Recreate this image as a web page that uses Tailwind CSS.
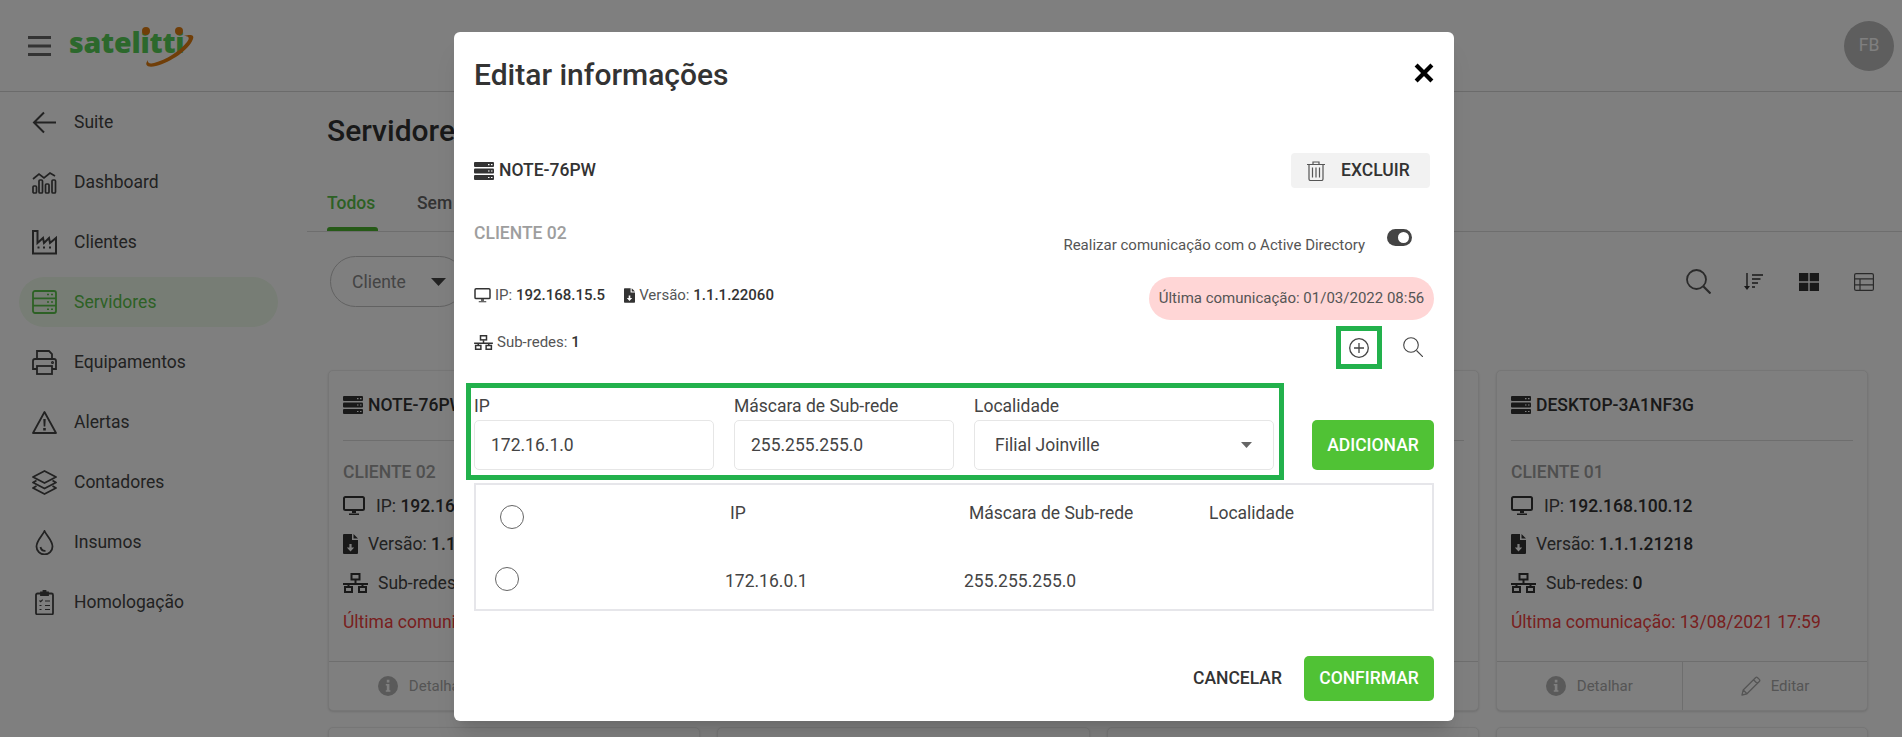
<!DOCTYPE html>
<html lang="pt-BR">
<head>
<meta charset="utf-8">
<title>Servidores</title>
<script src="https://cdn.jsdelivr.net/npm/@tailwindcss/browser@4"></script>
</head>
<body class="m-0">
<svg class="hidden" width="0" height="0">
  <symbol id="server" viewBox="0 0 20 18"><rect width="20" height="5" rx="1" fill="currentColor"/><rect y="6.5" width="20" height="5" rx="1" fill="currentColor"/><rect y="13" width="20" height="5" rx="1" fill="currentColor"/><path d="M14 2h1.5v1.2H14zM17 2h1.5v1.2H17zM14 8.4h1.5v1.2H14zM17 8.4h1.5v1.2H17zM14 14.9h1.5v1.2H14zM17 14.9h1.5v1.2H17z" fill="#fff"/></symbol>
  <symbol id="monitor" viewBox="0 0 22 20"><rect x="1" y="1" width="20" height="13" rx="1.5" fill="none" stroke="currentColor" stroke-width="2"/><path d="M9 15h4v2H9zM6 17.5h10V19H6z" fill="currentColor"/></symbol>
  <symbol id="file" viewBox="0 0 15 20"><path d="M0 1a1 1 0 0 1 1-1h8v6h6v13a1 1 0 0 1-1 1H1a1 1 0 0 1-1-1zM10.500 0 15 4.500h-4.500z" fill="currentColor"/><path d="M6.400 10h2.200v3.500h2.600L7.500 17.500l-3.700-4h2.600z" fill="#fff"/></symbol>
  <symbol id="net" viewBox="0 0 25 20"><g fill="none" stroke="currentColor" stroke-width="2"><rect x="8.500" y="1" width="8" height="5.500"/><rect x="2" y="14" width="7" height="5"/><rect x="16" y="14" width="7" height="5"/><path d="M12.500 7v4M0 11h25M5.500 11v3M19.500 11v3"/></g></symbol>
  <symbol id="info" viewBox="0 0 20 20"><circle cx="10" cy="10" r="10" fill="currentColor"/><path d="M8.800 3.800h2.600v2.600H8.800zM7.800 8h3.600v6.200h1v1.600H7.800v-1.600h1V9.600h-1z" fill="#fff"/></symbol>
  <symbol id="pencil" viewBox="0 0 20 20"><path d="M1 19l1.200-5L14.500 1.700a1.500 1.500 0 0 1 2.100 0l1.700 1.700a1.500 1.500 0 0 1 0 2.100L6 17.800zM2.200 14 6 17.800M12.500 3.700l3.800 3.800" fill="none" stroke="currentColor" stroke-width="1.300" stroke-linejoin="round"/></symbol>
</svg>

<div class="relative h-[737px] w-[1902px] overflow-hidden bg-white font-['Roboto',sans-serif] text-[#444]">
  <header class="flex h-[92px] items-center border-b border-[#d6d6d6] pl-[28px] pr-[8px]">
    <svg class="h-[20px] w-[23px] text-[#666]" viewBox="0 0 23 20"><path d="M0 1.500h23M0 10h23M0 18.500h23" stroke="currentColor" stroke-width="3"/></svg>
    <div class="relative ml-[18px] h-[60px] w-[130px]">
      <span class="absolute left-0 top-[8px] font-['Open_Sans',sans-serif] text-[28.5px] font-extrabold leading-[36px] tracking-[-0.2px] text-[#58d058]">satelitti</span>
      <svg class="absolute left-0 top-0 h-[60px] w-[130px]" viewBox="0 0 130 60"><path d="M79 44c-4 5-1 8 8 6 15-4 33-16 37-27 1.500-4-2-5-9-3 5 0 6 2 3 6-7 9-21 18-33 21-4 1-7 0-6-3z" fill="#e07d10"/><circle cx="77" cy="15" r="4" fill="#e07d10"/><circle cx="110" cy="15" r="4" fill="#e07d10"/></svg>
    </div>
    <div class="ml-auto flex h-[50px] w-[50px] items-center justify-center rounded-full bg-[#bcbcbc] text-[17.5px] text-white">FB</div>
  </header>

  <div class="flex h-[645px]">
    <nav class="flex w-[307px] flex-none flex-col gap-[10px] pt-[5px] text-[17.5px] text-[#444]">
      <a class="flex h-[50px] items-center pl-[32px]"><svg class="mr-[17px] h-[25px] w-[25px]" viewBox="0 0 25 25" fill="none" stroke="currentColor" stroke-width="2"><path d="M24 12.500H3M12 2.500l-10 10 10 10"/></svg>Suite</a>
      <a class="flex h-[50px] items-center pl-[32px]"><svg class="mr-[17px] h-[25px] w-[25px]" viewBox="0 0 25 25" fill="none" stroke="currentColor" stroke-width="1.700"><path d="M1 9l6-5 5 4 6-5 5 3"/><rect x="1" y="16" width="3.500" height="7" rx="1"/><rect x="7" y="10" width="3.500" height="13" rx="1"/><rect x="13.500" y="14" width="3.500" height="9" rx="1"/><rect x="20" y="10" width="3.500" height="13" rx="1"/></svg>Dashboard</a>
      <a class="flex h-[50px] items-center pl-[32px]"><svg class="mr-[17px] h-[25px] w-[25px]" viewBox="0 0 25 25" fill="none" stroke="currentColor" stroke-width="2"><path d="M1 1h4.500v12l5.500-5 1 5 5-5 1 5 6-5v15.500H1z"/><path d="M5.500 17.500h2M11 17.500h2M17 17.500h2" stroke-width="2"/></svg>Clientes</a>
      <a class="ml-[19px] flex h-[50px] w-[259px] items-center rounded-[25px] bg-[#eefbea] pl-[13px] text-[#5bc24a]"><svg class="mr-[17px] h-[24px] w-[25px]" viewBox="0 0 25 24" fill="none" stroke="currentColor" stroke-width="1.800"><rect x="1" y="1" width="23" height="22" rx="2"/><path d="M1 8.300h23M1 15.600h23"/><path d="M15 4.600h2M19 4.600h2M15 12h2M19 12h2M15 19.300h2M19 19.300h2" stroke-width="1.500"/></svg>Servidores</a>
      <a class="flex h-[50px] items-center pl-[32px]"><svg class="mr-[17px] h-[25px] w-[25px]" viewBox="0 0 25 25" fill="none" stroke="currentColor" stroke-width="1.800"><path d="M5 9V1h12l3 3v5M5 19H1V11a2 2 0 0 1 2-2h19a2 2 0 0 1 2 2v8h-4"/><rect x="5" y="16" width="15" height="8"/><circle cx="20.500" cy="12.500" r=".6"/></svg>Equipamentos</a>
      <a class="flex h-[50px] items-center pl-[32px]"><svg class="mr-[17px] h-[25px] w-[25px]" viewBox="0 0 25 25"><path d="M12.500 2 24 23H1z" fill="none" stroke="currentColor" stroke-width="1.800" stroke-linejoin="round"/><path d="M11.300 9h2.400l-.4 7.500h-1.600zM11.200 18h2.600v2.400h-2.600z" fill="currentColor"/></svg>Alertas</a>
      <a class="flex h-[50px] items-center pl-[32px]"><svg class="mr-[17px] h-[25px] w-[25px]" viewBox="0 0 25 25" fill="none" stroke="currentColor" stroke-width="1.800" stroke-linejoin="round"><path d="M12.500 1 24 7l-11.500 6L1 7zM4.500 10.500 1 12.500l11.500 6 11.500-6-3.500-2M4.500 16 1 18l11.500 6L24 18l-3.500-2"/></svg>Contadores</a>
      <a class="flex h-[50px] items-center pl-[32px]"><svg class="mr-[17px] h-[25px] w-[25px]" viewBox="0 0 25 25" fill="none" stroke="currentColor" stroke-width="1.800"><path d="M12.500 1c2 4.500 8 9.500 8 15.500a8 8 0 0 1-16 0C4.500 10.500 10.500 5.500 12.500 1z"/><path d="M8.500 17c.5 2.500 2.500 4 5 3.800"/></svg>Insumos</a>
      <a class="flex h-[50px] items-center pl-[32px]"><svg class="mr-[17px] h-[25px] w-[25px]" viewBox="0 0 25 25" fill="none" stroke="currentColor" stroke-width="1.800"><rect x="4" y="3.500" width="17" height="21" rx="1.500"/><path d="M9 4V2.500h2.500V1h2v1.500H16V5H9z" fill="currentColor"/><path d="M7.500 10.500l1.200 1.200 2-2M13 11h5M7.500 15.500h2M13 15.500h5M7.500 19.500h2M13 19.500h5" stroke-width="1.200"/></svg>Homologação</a>
    </nav>

    <main class="min-w-0 flex-1">
      <h1 class="ml-[20px] mt-[21px] text-[30px] font-medium leading-[36px] text-[#333]">Servidores</h1>
      <div class="mt-[41px] flex gap-[39px] border-b border-[#dcdcdc] pl-[20px] text-[17.5px] font-medium">
        <div class="w-[51px] text-[#5bc24a]"><div class="h-[37px] leading-[26px]">Todos</div><div class="h-[4px] rounded-t-[3px] bg-[#4cb52f]"></div></div>
        <div class="text-[#666]"><div class="h-[37px] leading-[26px]">Sem comunicação</div></div>
      </div>
      <div class="mt-[24px] flex h-[51px] items-center pl-[23px] pr-[28px]">
        <div class="flex h-[51px] w-[135px] items-center rounded-full border border-[#c4c4c4] pl-[21px] pt-[1px] text-[17.5px] text-[#888]">Cliente<svg class="ml-[25px] h-[8px] w-[15px]" viewBox="0 0 15 8"><path d="M0 0h15L7.500 8z" fill="#444"/></svg></div>
        <svg class="ml-auto h-[25px] w-[25px] text-[#555]" viewBox="0 0 25 25" fill="none" stroke="currentColor" stroke-width="1.800"><circle cx="10.500" cy="10.500" r="9.500"/><path d="M17.500 17.500 24.500 24.500" stroke-width="2.200"/></svg>
        <svg class="ml-[33px] h-[18px] w-[20px] text-[#333]" viewBox="0 0 20 18" fill="none" stroke="currentColor" stroke-width="1.400"><path d="M3 0v15"/><path d="M0 13h6l-3 4z" fill="currentColor" stroke="none"/><path d="M8 2h11M8 6h8.500M8 10h6M8 14h3"/></svg>
        <svg class="ml-[35px] h-[18px] w-[20px] text-[#333]" viewBox="0 0 20 18"><path d="M0 0h9.300v8.300H0zM10.700 0H20v8.300h-9.300zM0 9.700h9.300V18H0zM10.700 9.700H20V18h-9.300z" fill="currentColor"/></svg>
        <svg class="ml-[35px] h-[18px] w-[20px] text-[#555]" viewBox="0 0 20 18" fill="none" stroke="currentColor" stroke-width="1.200"><rect x=".6" y=".6" width="18.800" height="16.800" rx="1.500"/><path d="M.6 5.800h18.800M.6 11.800h18.800M6 5.800v11.600"/></svg>
      </div>

      <div class="ml-[21px] mt-[63px] grid w-[1540.33px] grid-cols-4 gap-x-[17px] gap-y-[16px]">
        <article class="flex h-[341px] flex-col overflow-hidden rounded-[5px] border border-[#ececec] bg-white px-[14px] text-[17.5px] leading-[24px] shadow-sm">
          <div class="mt-[22px] flex h-[24px] items-center font-medium text-[#333]"><svg class="mr-[5px] h-[18px] w-[20px] text-[#333]"><use href="#server"/></svg>NOTE-76PW</div>
          <div class="mt-[23px] border-b border-[#dcdcdc]"></div>
          <div class="mt-[19px] font-medium text-[#9e9e9e]">CLIENTE 02</div>
          <div class="mt-[10px] flex items-center"><svg class="mr-[11px] h-[20px] w-[22px] text-[#333]"><use href="#monitor"/></svg><span>IP: <b class="font-medium text-[#333]">192.168.15.5</b></span></div>
          <div class="mt-[14px] flex items-center"><svg class="mr-[10px] h-[20px] w-[15px] text-[#333]"><use href="#file"/></svg><span>Versão: <b class="font-medium text-[#333]">1.1.1.22060</b></span></div>
          <div class="mt-[15px] flex items-center"><svg class="mr-[10px] h-[20px] w-[25px] text-[#333]"><use href="#net"/></svg><span>Sub-redes: <b class="font-medium text-[#333]">1</b></span></div>
          <div class="mt-[15px] whitespace-nowrap text-[#f04040]">Última comunicação: 01/03/2022 08:56</div>
          <div class="-mx-[14px] mt-auto flex h-[49px] border-t border-[#dcdcdc] text-[15px] text-[#aaa]">
            <div class="flex flex-1 items-center justify-center gap-[11px]"><svg class="h-[20px] w-[20px] text-[#b5b5b5]"><use href="#info"/></svg>Detalhar</div>
            <div class="flex flex-1 items-center justify-center gap-[10px] border-l border-[#dcdcdc]"><svg class="h-[20px] w-[20px]"><use href="#pencil"/></svg>Editar</div>
          </div>
        </article>
        <article class="flex h-[341px] flex-col rounded-[5px] border border-[#ececec] bg-white px-[14px] shadow-sm"><div class="mt-[69px] border-b border-[#dcdcdc]"></div><div class="-mx-[14px] mt-auto h-[49px] border-t border-[#dcdcdc]"></div></article>
        <article class="flex h-[341px] flex-col rounded-[5px] border border-[#ececec] bg-white px-[14px] shadow-sm"><div class="mt-[69px] border-b border-[#dcdcdc]"></div><div class="-mx-[14px] mt-auto h-[49px] border-t border-[#dcdcdc]"></div></article>
        <article class="flex h-[341px] flex-col overflow-hidden rounded-[5px] border border-[#ececec] bg-white px-[14px] text-[17.5px] leading-[24px] shadow-sm">
          <div class="mt-[22px] flex h-[24px] items-center font-medium text-[#333]"><svg class="mr-[5px] h-[18px] w-[20px] text-[#333]"><use href="#server"/></svg>DESKTOP-3A1NF3G</div>
          <div class="mt-[23px] border-b border-[#dcdcdc]"></div>
          <div class="mt-[19px] font-medium text-[#9e9e9e]">CLIENTE 01</div>
          <div class="mt-[10px] flex items-center"><svg class="mr-[11px] h-[20px] w-[22px] text-[#333]"><use href="#monitor"/></svg><span>IP: <b class="font-medium text-[#333]">192.168.100.12</b></span></div>
          <div class="mt-[14px] flex items-center"><svg class="mr-[10px] h-[20px] w-[15px] text-[#333]"><use href="#file"/></svg><span>Versão: <b class="font-medium text-[#333]">1.1.1.21218</b></span></div>
          <div class="mt-[15px] flex items-center"><svg class="mr-[10px] h-[20px] w-[25px] text-[#333]"><use href="#net"/></svg><span>Sub-redes: <b class="font-medium text-[#333]">0</b></span></div>
          <div class="mt-[15px] whitespace-nowrap text-[#f04040]">Última comunicação: 13/08/2021 17:59</div>
          <div class="-mx-[14px] mt-auto flex h-[49px] border-t border-[#dcdcdc] text-[15px] text-[#aaa]">
            <div class="flex flex-1 items-center justify-center gap-[11px]"><svg class="h-[20px] w-[20px] text-[#b5b5b5]"><use href="#info"/></svg>Detalhar</div>
            <div class="flex flex-1 items-center justify-center gap-[10px] border-l border-[#dcdcdc]"><svg class="h-[20px] w-[20px]"><use href="#pencil"/></svg>Editar</div>
          </div>
        </article>
        <article class="h-[341px] rounded-[5px] border border-[#ececec] bg-white shadow-sm"></article>
        <article class="h-[341px] rounded-[5px] border border-[#ececec] bg-white shadow-sm"></article>
        <article class="h-[341px] rounded-[5px] border border-[#ececec] bg-white shadow-sm"></article>
        <article class="h-[341px] rounded-[5px] border border-[#ececec] bg-white shadow-sm"></article>
      </div>
    </main>
  </div>

  <div class="absolute inset-0 bg-black/50"></div>

  <section class="absolute left-[454px] top-[32px] flex h-[689px] w-[1000px] flex-col rounded-[6px] bg-white px-[20px] text-[#444] shadow-xl">
    <div class="mt-[23px] flex h-[40px] items-center justify-between">
      <h2 class="text-[30px] font-medium leading-[40px] text-[#333]">Editar informações</h2>
      <svg class="mb-[4px] h-[20px] w-[20px]" viewBox="0 0 19 19"><path d="M2 2l15 15M17 2 2 17" stroke="#000" stroke-width="4"/></svg>
    </div>

    <div class="mt-[58px] flex h-[35px] items-center justify-between">
      <div class="flex items-center text-[17.5px] font-medium text-[#333]"><svg class="mr-[5px] h-[18px] w-[20px] text-[#333]"><use href="#server"/></svg>NOTE-76PW</div>
      <button class="mr-[4px] flex h-[35px] w-[139px] items-center rounded-[4px] bg-[#f2f2f2] pl-[16px] text-[17.5px] font-medium text-[#333]"><svg class="mr-[16px] h-[20px] w-[18px] text-[#555]" viewBox="0 0 18 20" fill="none" stroke="currentColor" stroke-width="1.200"><path d="M0 3.500h18M6 3V1h6v2M2 3.500V18a1.500 1.500 0 0 0 1.500 1.500h11A1.500 1.500 0 0 0 16 18V3.500M5.500 6.500v10M9 6.500v10M12.500 6.500v10"/></svg>EXCLUIR</button>
    </div>

    <div class="flex h-[89px] justify-between">
      <div class="mt-[33px] text-[17.5px] font-medium leading-[24px] text-[#9e9e9e]">CLIENTE 02</div>
      <div class="flex items-start">
        <span class="mt-[47px] text-[15px] leading-[20px] text-[#555]">Realizar comunicação com o Active Directory</span>
        <div class="ml-[22px] mr-[22px] mt-[41px] flex h-[17px] w-[25px] items-center justify-end rounded-full bg-[#444] pr-[3px]"><div class="h-[11px] w-[11px] rounded-full bg-white"></div></div>
      </div>
    </div>

    <div class="flex h-[43px] justify-between text-[15px]">
      <div class="mt-[8px] flex h-[20px] items-center text-[#555]">
        <svg class="mr-[4px] h-[15px] w-[17px] text-[#333]"><use href="#monitor"/></svg><span>IP: <b class="font-medium text-[#333]">192.168.15.5</b></span>
        <svg class="ml-[19px] mr-[4px] h-[15px] w-[11px] text-[#333]"><use href="#file"/></svg><span>Versão: <b class="font-medium text-[#333]">1.1.1.22060</b></span>
      </div>
      <div class="flex w-[285px] items-center justify-center rounded-full bg-[#ffd6d6] text-[#555]">Última comunicação: 01/03/2022 08:56</div>
    </div>

    <div class="flex h-[63px] justify-between">
      <div class="mt-[12px] flex h-[20px] items-center text-[15px] text-[#555]"><svg class="mr-[4px] h-[15px] w-[19px] text-[#333]"><use href="#net"/></svg><span>Sub-redes: <b class="font-medium text-[#333]">1</b></span></div>
      <div class="mr-[11px] mt-[6px] flex h-[43px] items-start">
        <div class="flex h-[43px] w-[46px] items-center justify-center border-[5px] border-[#22b14c]"><svg class="h-[20px] w-[20px] text-[#444]" viewBox="0 0 20 20" fill="none" stroke="currentColor" stroke-width="1.300"><circle cx="10" cy="10" r="9.300"/><path d="M10 5v10M5 10h10"/></svg></div>
        <svg class="ml-[21px] mt-[11px] h-[20px] w-[20px] text-[#444]" viewBox="0 0 20 20" fill="none" stroke="currentColor" stroke-width="1.100"><circle cx="8" cy="8" r="7.300"/><path d="M13.500 13.500 20 20"/></svg>
      </div>
    </div>

    <div class="flex h-[97px] items-start justify-between">
      <div class="-ml-[8px] flex h-[97px] w-[818px] gap-[20px] border-[5px] border-[#22b14c] pl-[3px] pt-[6px] text-[17.5px]">
        <label class="block w-[240px]"><span class="block h-[26px] leading-[24px]">IP</span><div class="flex h-[50px] items-center rounded-[5px] border border-[#e6e6e6] pl-[16px]">172.16.1.0</div></label>
        <label class="block w-[220px]"><span class="block h-[26px] leading-[24px]">Máscara de Sub-rede</span><div class="flex h-[50px] items-center rounded-[5px] border border-[#e6e6e6] pl-[16px]">255.255.255.0</div></label>
        <label class="block w-[300px]"><span class="block h-[26px] leading-[24px]">Localidade</span><div class="flex h-[50px] items-center justify-between rounded-[5px] border border-[#e6e6e6] pl-[20px] pr-[21px]">Filial Joinville<svg class="h-[6px] w-[11px]" viewBox="0 0 11 6"><path d="M0 0h11L5.500 6z" fill="#666"/></svg></div></label>
      </div>
      <button class="mt-[37px] h-[50px] w-[122px] rounded-[5px] bg-[#50c235] text-[17.5px] font-medium text-white">ADICIONAR</button>
    </div>

    <div class="mt-[3px] h-[128px] border-2 border-[#e6e6ea] text-[17.5px] leading-[24px]">
      <div class="flex h-[62px] items-start">
        <div class="w-[254px] pl-[24px] pt-[20px]"><div class="h-[24px] w-[24px] rounded-full border-[1.5px] border-[#666]"></div></div>
        <div class="mt-[16px] w-[239px]">IP</div>
        <div class="mt-[16px] w-[240px]">Máscara de Sub-rede</div>
        <div class="mt-[16px]">Localidade</div>
      </div>
      <div class="flex items-start">
        <div class="w-[249px] pl-[19px] pt-[20px]"><div class="h-[24px] w-[24px] rounded-full border-[1.5px] border-[#666]"></div></div>
        <div class="mt-[22px] w-[239px]">172.16.0.1</div>
        <div class="mt-[22px]">255.255.255.0</div>
      </div>
    </div>

    <div class="mt-[45px] flex h-[45px] items-center justify-end gap-[22px] text-[17.5px] font-medium">
      <button class="text-[#333]">CANCELAR</button>
      <button class="h-[45px] w-[130px] rounded-[5px] bg-[#50c235] text-white">CONFIRMAR</button>
    </div>
  </section>
</div>
</body>
</html>
